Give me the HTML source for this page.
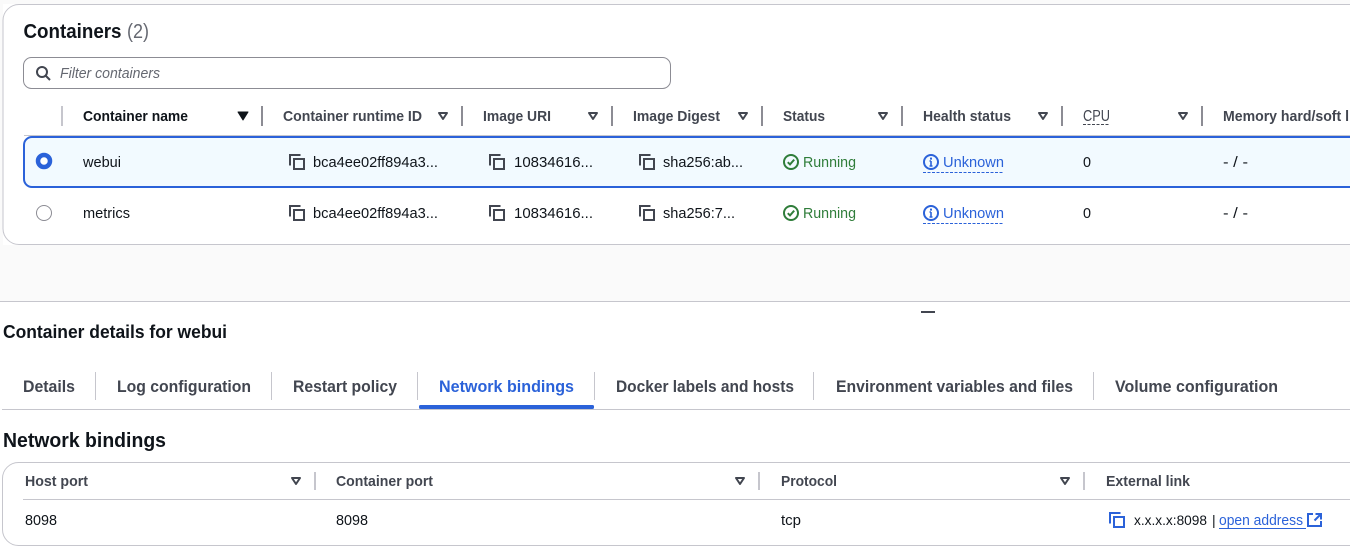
<!DOCTYPE html>
<html><head><meta charset="utf-8"><style>
html,body{margin:0;padding:0;background:#fff;width:1350px;height:554px;overflow:hidden}
svg{display:block}
text{font-family:"Liberation Sans",sans-serif;font-size:15px;fill:#0f141a}
.h{font-weight:700;fill:#424650}
.b{font-weight:700}
.g{fill:#2f7d3a}
.l{fill:#2b62d9}
.t{font-weight:700;fill:#424650;font-size:16.5px}
.s{stroke:#8c8c94;stroke-width:2}
.ts{stroke:#c6c6cd;stroke-width:1}
</style></head><body>
<svg width="1350" height="554" viewBox="0 0 1350 554" xmlns="http://www.w3.org/2000/svg">
<defs>
<symbol id="copy" viewBox="0 0 16 16" overflow="visible"><path d="M1 11.5V1H11.5M5 5H15V15H5Z" fill="none" stroke="currentColor" stroke-width="2"/></symbol>
<symbol id="caret" viewBox="0 0 10 8" overflow="visible"><path d="M1 1H9L5 7Z" fill="none" stroke="#424650" stroke-width="2" stroke-linejoin="round"/></symbol>
<symbol id="ok" viewBox="0 0 16 16" overflow="visible"><circle cx="8" cy="8" r="7" fill="none" stroke="#2f7d3a" stroke-width="2"/><path d="M4.8 8.2L7 10.4L11.2 5.6" fill="none" stroke="#2f7d3a" stroke-width="2"/></symbol>
<symbol id="info" viewBox="0 0 16 16" overflow="visible"><circle cx="8" cy="8" r="7" fill="none" stroke="#2b62d9" stroke-width="2"/><path d="M8 7V12M6.5 12H9.5M6.5 7H8" fill="none" stroke="#2b62d9" stroke-width="1.6"/><rect x="7" y="3.6" width="2" height="2" fill="#2b62d9"/></symbol>
</defs>

<rect x="0" y="0" width="1350" height="301" fill="#fff"/>
<rect x="0" y="245" width="1350" height="56" fill="#fafafa"/>
<rect x="0" y="0" width="3" height="301" fill="#fafafa"/>
<rect x="0" y="0" width="1350" height="4" fill="#fafafa"/>
<rect x="3" y="4.5" width="1400" height="240" rx="16" fill="#fff" stroke="#c6c6cd"/>
<line x1="0" y1="301.5" x2="1350" y2="301.5" stroke="#c6c6cd"/>

<text x="23.5" y="38" class="b" style="font-size:20px" textLength="98" lengthAdjust="spacingAndGlyphs">Containers</text>
<text x="127" y="38" style="font-size:20px;fill:#656871" textLength="22" lengthAdjust="spacingAndGlyphs">(2)</text>

<rect x="23.5" y="57.5" width="647" height="31" rx="8" fill="#fff" stroke="#8c8c94"/>
<circle cx="42" cy="72" r="5" fill="none" stroke="#424650" stroke-width="2"/>
<path d="M45.5 75.5L50 80" stroke="#424650" stroke-width="2"/>
<text x="60" y="78" style="font-style:italic;fill:#656871" textLength="100" lengthAdjust="spacingAndGlyphs">Filter containers</text>

<line x1="62" y1="106" x2="62" y2="126" stroke="#c6c6cd" stroke-width="2"/>
<line x1="262" y1="106" x2="262" y2="126" class="s"/>
<line x1="462" y1="106" x2="462" y2="126" class="s"/>
<line x1="612" y1="106" x2="612" y2="126" class="s"/>
<line x1="762" y1="106" x2="762" y2="126" class="s"/>
<line x1="902" y1="106" x2="902" y2="126" class="s"/>
<line x1="1062" y1="106" x2="1062" y2="126" class="s"/>
<line x1="1202" y1="106" x2="1202" y2="126" class="s"/>
<line x1="24" y1="135.5" x2="1350" y2="135.5" stroke="#c6c6cd"/>

<text x="83" y="121" class="b" textLength="105" lengthAdjust="spacingAndGlyphs">Container name</text>
<text x="283" y="121" class="h" textLength="139" lengthAdjust="spacingAndGlyphs">Container runtime ID</text>
<text x="483" y="121" class="h" textLength="68" lengthAdjust="spacingAndGlyphs">Image URI</text>
<text x="633" y="121" class="h" textLength="87" lengthAdjust="spacingAndGlyphs">Image Digest</text>
<text x="783" y="121" class="h" textLength="42" lengthAdjust="spacingAndGlyphs">Status</text>
<text x="923" y="121" class="h" textLength="88" lengthAdjust="spacingAndGlyphs">Health status</text>
<text x="1083" y="121" style="fill:#424650;font-size:16px" textLength="27" lengthAdjust="spacingAndGlyphs">CPU</text>
<line x1="1083" y1="124.5" x2="1110" y2="124.5" stroke="#424650" stroke-dasharray="3 1.5"/>
<text x="1223" y="121" class="h" textLength="126" lengthAdjust="spacingAndGlyphs">Memory hard/soft l</text>

<path d="M238 112H248L243 120Z" fill="#0f141a" stroke="#0f141a" stroke-linejoin="round"/>
<use href="#caret" x="438" y="112" width="10" height="8"/>
<use href="#caret" x="588" y="112" width="10" height="8"/>
<use href="#caret" x="738" y="112" width="10" height="8"/>
<use href="#caret" x="878" y="112" width="10" height="8"/>
<use href="#caret" x="1038" y="112" width="10" height="8"/>
<use href="#caret" x="1178" y="112" width="10" height="8"/>

<rect x="24" y="137" width="1400" height="50" rx="8" fill="#f2faff" stroke="#2b62d9" stroke-width="2"/>

<circle cx="44" cy="161" r="6" fill="#fff" stroke="#2b62d9" stroke-width="4.5"/>
<circle cx="44" cy="213" r="7.5" fill="#fff" stroke="#8c8c94" stroke-width="1"/>

<g style="color:#424650">
<use href="#copy" x="289" y="154" width="16" height="16"/>
<use href="#copy" x="489" y="154" width="16" height="16"/>
<use href="#copy" x="639" y="154" width="16" height="16"/>
<use href="#copy" x="289" y="205" width="16" height="16"/>
<use href="#copy" x="489" y="205" width="16" height="16"/>
<use href="#copy" x="639" y="205" width="16" height="16"/>
</g>

<text x="83" y="167" textLength="38" lengthAdjust="spacingAndGlyphs">webui</text>
<text x="313" y="167" textLength="125" lengthAdjust="spacingAndGlyphs">bca4ee02ff894a3...</text>
<text x="514" y="167" textLength="79" lengthAdjust="spacingAndGlyphs">10834616...</text>
<text x="663" y="167" textLength="80" lengthAdjust="spacingAndGlyphs">sha256:ab...</text>
<use href="#ok" x="783" y="154" width="16" height="16"/>
<text x="803" y="167" class="g" textLength="53" lengthAdjust="spacingAndGlyphs">Running</text>
<use href="#info" x="923" y="154" width="16" height="16"/>
<text x="943" y="167" class="l" textLength="61" lengthAdjust="spacingAndGlyphs">Unknown</text>
<line x1="923" y1="172.5" x2="1004" y2="172.5" stroke="#2b62d9" stroke-dasharray="3 1.5"/>
<text x="1083" y="167" textLength="8" lengthAdjust="spacingAndGlyphs">0</text>
<text x="1223" y="167" textLength="25" lengthAdjust="spacingAndGlyphs">- / -</text>

<text x="83" y="218" textLength="47" lengthAdjust="spacingAndGlyphs">metrics</text>
<text x="313" y="218" textLength="125" lengthAdjust="spacingAndGlyphs">bca4ee02ff894a3...</text>
<text x="514" y="218" textLength="79" lengthAdjust="spacingAndGlyphs">10834616...</text>
<text x="663" y="218" textLength="72" lengthAdjust="spacingAndGlyphs">sha256:7...</text>
<use href="#ok" x="783" y="205" width="16" height="16"/>
<text x="803" y="218" class="g" textLength="53" lengthAdjust="spacingAndGlyphs">Running</text>
<use href="#info" x="923" y="205" width="16" height="16"/>
<text x="943" y="218" class="l" textLength="61" lengthAdjust="spacingAndGlyphs">Unknown</text>
<line x1="923" y1="223.5" x2="1004" y2="223.5" stroke="#2b62d9" stroke-dasharray="3 1.5"/>
<text x="1083" y="218" textLength="8" lengthAdjust="spacingAndGlyphs">0</text>
<text x="1223" y="218" textLength="25" lengthAdjust="spacingAndGlyphs">- / -</text>

<rect x="921" y="311" width="14" height="2" fill="#424650"/>

<text x="3" y="338" class="b" style="font-size:18px" textLength="224" lengthAdjust="spacingAndGlyphs">Container details for webui</text>

<text x="23" y="392" class="t" textLength="52" lengthAdjust="spacingAndGlyphs">Details</text>
<text x="117" y="392" class="t" textLength="134" lengthAdjust="spacingAndGlyphs">Log configuration</text>
<text x="293" y="392" class="t" textLength="104" lengthAdjust="spacingAndGlyphs">Restart policy</text>
<text x="439" y="392" class="t" style="fill:#2b62d9" textLength="135" lengthAdjust="spacingAndGlyphs">Network bindings</text>
<text x="616" y="392" class="t" textLength="178" lengthAdjust="spacingAndGlyphs">Docker labels and hosts</text>
<text x="836" y="392" class="t" textLength="237" lengthAdjust="spacingAndGlyphs">Environment variables and files</text>
<text x="1115" y="392" class="t" textLength="163" lengthAdjust="spacingAndGlyphs">Volume configuration</text>
<line x1="95.5" y1="372" x2="95.5" y2="400" class="ts"/>
<line x1="271.5" y1="372" x2="271.5" y2="400" class="ts"/>
<line x1="417.5" y1="372" x2="417.5" y2="400" class="ts"/>
<line x1="594.5" y1="372" x2="594.5" y2="400" class="ts"/>
<line x1="813.5" y1="372" x2="813.5" y2="400" class="ts"/>
<line x1="1093.5" y1="372" x2="1093.5" y2="400" class="ts"/>
<line x1="2" y1="409.5" x2="1350" y2="409.5" stroke="#c6c6cd"/>
<rect x="419" y="405" width="175" height="4" rx="1.5" fill="#2b62d9"/>

<text x="3" y="447" class="b" style="font-size:20px" textLength="163" lengthAdjust="spacingAndGlyphs">Network bindings</text>

<rect x="2.5" y="462.5" width="1400" height="83" rx="16" fill="#fff" stroke="#c6c6cd"/>
<line x1="23" y1="499.5" x2="1350" y2="499.5" stroke="#c6c6cd"/>
<line x1="315" y1="472" x2="315" y2="490" stroke="#c6c6cd" stroke-width="2"/>
<line x1="759" y1="472" x2="759" y2="490" stroke="#c6c6cd" stroke-width="2"/>
<line x1="1084" y1="472" x2="1084" y2="490" stroke="#c6c6cd" stroke-width="2"/>
<text x="25" y="486" class="h" textLength="63" lengthAdjust="spacingAndGlyphs">Host port</text>
<text x="336" y="486" class="h" textLength="97" lengthAdjust="spacingAndGlyphs">Container port</text>
<text x="781" y="486" class="h" textLength="56" lengthAdjust="spacingAndGlyphs">Protocol</text>
<text x="1106" y="486" class="h" textLength="84" lengthAdjust="spacingAndGlyphs">External link</text>
<use href="#caret" x="291" y="477" width="10" height="8"/>
<use href="#caret" x="735" y="477" width="10" height="8"/>
<use href="#caret" x="1060" y="477" width="10" height="8"/>

<text x="25" y="525" textLength="32" lengthAdjust="spacingAndGlyphs">8098</text>
<text x="336" y="525" textLength="32" lengthAdjust="spacingAndGlyphs">8098</text>
<text x="781" y="525" textLength="20" lengthAdjust="spacingAndGlyphs">tcp</text>
<use href="#copy" x="1109" y="512" width="16" height="16" style="color:#2b62d9"/>
<text x="1134" y="525" style="font-size:14px" textLength="73" lengthAdjust="spacingAndGlyphs">x.x.x.x:8098</text>
<text x="1212" y="525" style="font-size:14px">|</text>
<text x="1219" y="525" class="l" textLength="84" lengthAdjust="spacingAndGlyphs">open address</text>
<line x1="1219" y1="528.5" x2="1306" y2="528.5" stroke="#2b62d9"/>
<path d="M1313 514H1308V526H1321V521M1315.5 514H1321V519.5M1321 514L1314.5 520.5" fill="none" stroke="#2b62d9" stroke-width="2"/>
</svg>
</body></html>
